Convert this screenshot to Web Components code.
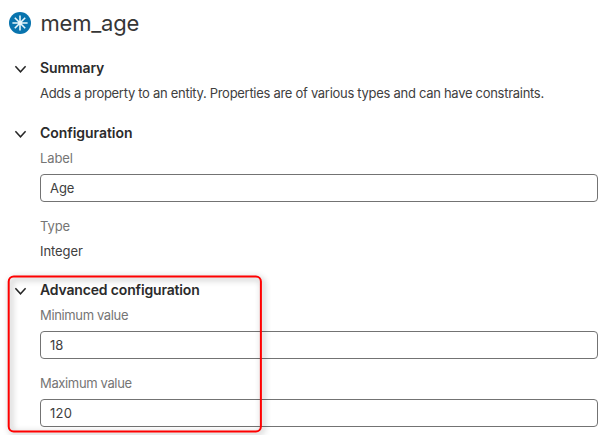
<!DOCTYPE html>
<html lang="en">
<head>
<meta charset="utf-8">
<title>mem_age</title>
<style>
body { margin: 0; background: #fff; }
</style>
</head>
<body>
<property-panel></property-panel>
<script>
const define = (name, html) => customElements.define(name, class extends HTMLElement {
  constructor() {
    super();
    this.attachShadow({ mode: 'open' }).innerHTML = html;
  }
});

define('property-icon', `
<style>:host{display:block;width:22px;height:22px} svg{display:block}</style>
<svg width="22" height="22" viewBox="0 0 22 22"><circle cx="11" cy="11" r="11" fill="#0874ae"/>
<path d="M11 3.4v15.2M3.4 11h15.2M5.8 5.8l10.4 10.4M16.2 5.8L5.8 16.2" stroke="#e8f7fc" stroke-width="1.6" fill="none"/></svg>`);

define('panel-title', `
<style>
:host{display:flex;align-items:center;gap:9.5px;height:30px;padding:8px 0 0 9px;color:#363636;font-size:22px;letter-spacing:-.22px}
</style>
<property-icon></property-icon><span><slot></slot></span>`);

define('section-block', `
<style>
:host{display:grid;grid-template-columns:40px 558px}
svg{display:block;margin:7px 0 0 14px}
h2{margin:0;height:20px;line-height:20px;font-size:14px;font-weight:600;color:#2b2b2b;letter-spacing:var(--head-track,0)}
</style>
<svg width="13" height="9" viewBox="0 0 13 9"><path d="M1.4 1.3L6.5 6.8L11.6 1.3" fill="none" stroke="#262626" stroke-width="1.5"/></svg>
<div><h2><slot name="heading"></slot></h2><slot></slot></div>`);

define('body-text', `
<style>:host{display:block;height:20px;line-height:20px;font-size:13px;color:#404040;white-space:nowrap;letter-spacing:var(--track,0)}</style>
<span><slot></slot></span>`);

define('field-label', `
<style>:host{display:block;height:20px;line-height:20px;font-size:13px;color:#757575;letter-spacing:var(--track,0)}</style>
<span><slot></slot></span>`);

define('text-field', `
<style>:host{display:block;box-sizing:border-box;width:558px;height:28px;margin-top:6px;padding-left:9px;border:1px solid #737373;border-radius:4px;line-height:27px;font-size:13px;color:#404040;letter-spacing:var(--track,0)}</style>
<span><slot></slot></span>`);

define('highlight-frame', `
<style>:host{display:block;position:absolute;left:0;top:268px;pointer-events:none} svg{display:block;filter:drop-shadow(2px 2px 3px rgba(0,0,0,.4))}</style>
<svg width="280" height="167" viewBox="0 0 280 167"><rect x="8.7" y="8.6" width="252.2" height="155" rx="5" fill="none" stroke="#f00" stroke-width="2"/></svg>`);

define('property-panel', `
<style>
:host{display:block;position:relative;width:604px;height:435px;overflow:hidden;font-family:Inter,"Liberation Sans",sans-serif}
.summary{margin-top:20px;--head-track:-.1px;--track:-.29px}
.config{margin-top:20px;--head-track:-.05px;--track:-.08px}
.advanced{margin-top:19px;--head-track:-.16px}
.summary body-text{margin-top:5px}
.config field-label{margin-top:5px}
.config .type{margin-top:14px}
.config body-text{margin-top:5px}
.advanced field-label{margin-top:5px;--track:-.36px}
.advanced .max{margin-top:14px}
</style>
<panel-title>mem_age</panel-title>
<section-block class="summary"><span slot="heading">Summary</span>
<body-text>Adds a property to an entity. Properties are of various types and can have constraints.</body-text></section-block>
<section-block class="config"><span slot="heading">Configuration</span>
<field-label>Label</field-label><text-field>Age</text-field>
<field-label class="type">Type</field-label><body-text>Integer</body-text></section-block>
<section-block class="advanced"><span slot="heading">Advanced configuration</span>
<field-label>Minimum value</field-label><text-field>18</text-field>
<field-label class="max">Maximum value</field-label><text-field style="--track:.3px">120</text-field></section-block>
<highlight-frame></highlight-frame>`);
</script>
</body>
</html>
